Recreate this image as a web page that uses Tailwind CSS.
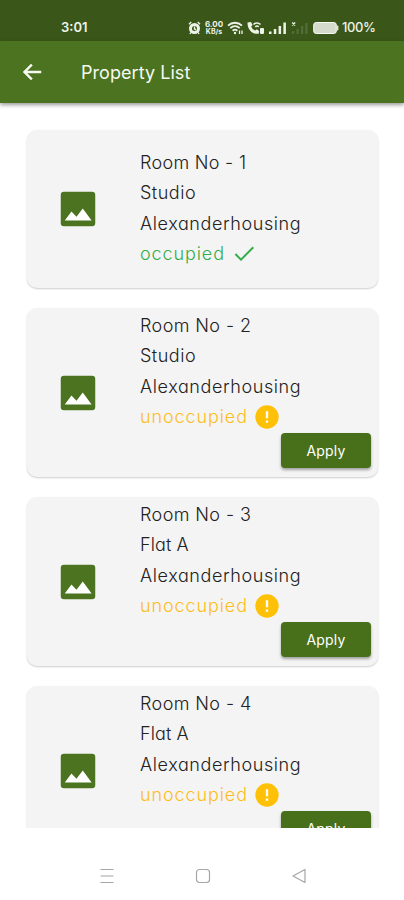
<!DOCTYPE html>
<html lang="en">
<head>
    <meta charset="UTF-8">
    <meta name="viewport" content="width=device-width, initial-scale=1.0">
    <title>Property List</title>
    <script src="https://cdn.jsdelivr.net/npm/@tailwindcss/browser@4"></script>
    <style>
        /* Single-storey a */
        body {
            font-feature-settings: "cv11";
        }
    </style>
</head>
<body class="h-screen w-screen overflow-hidden bg-white font-['Inter','Noto_Sans',sans-serif] text-[#222] flex flex-col">
    <!-- Status bar -->
    <div class="h-[41px] shrink-0 bg-[#3a5619] text-[#eef3e8] flex items-center pt-[15px] pl-[61px]">
        <span id="clock" class="w-[127px] text-[13px] font-semibold">3:01</span>
        <svg class="w-[13px] h-[14px]" viewBox="0 0 13 14">
            <circle cx="6.5" cy="7.5" r="4" fill="none" stroke="currentColor" stroke-width="3" />
            <path d="M1 3.2L3.3 1M12 3.2L9.7 1M6.5 5.5v2.3l1.5 1M2.8 11.5L2 13M10.2 11.5L11 13" fill="none" stroke="currentColor" stroke-width="1.4" />
        </svg>
        <div class="w-[20px] ml-[3px] flex flex-col items-center text-[8px] font-bold">
            <div class="h-[7px] leading-[7px]">6.00</div>
            <div class="h-[7px] leading-[7px] text-[7px]">KB/s</div>
        </div>
        <svg class="ml-[3px] w-[17px] h-[14px]" viewBox="0 0 17 14" fill="none" stroke="currentColor" stroke-width="1.8">
            <path d="M1 4.6C5 .8 11 .8 15 4.6M3.3 7.2c2.800-2.600 6.600-2.600 9.400 0M5.600 9.700c1.500-1.300 3.300-1.300 4.800 0" />
            <circle cx="8" cy="12" r="1.200" fill="currentColor" stroke="none" />
            <path d="M12.500 9.500v3.500M15 9.500v3.500" stroke-width="1.300" />
        </svg>
        <svg class="ml-[3px] w-[18px] h-[14px]" viewBox="0 0 18 14">
            <path d="M.5 1.500L4 1l1.600 3-1.400 1.500c.7 1.900 2 3.200 3.900 4l1.700-1.200 2.300 1.600-.4 2.800C5.500 13.600.3 8.500.5 1.500z" fill="currentColor" />
            <path d="M6.500 3.500C8.500 1.500 11.500 1.500 13.500 3.500M8.300 5.800c1-1 2.400-1 3.400 0" fill="none" stroke="currentColor" stroke-width="1.700" />
            <rect x="13" y="7" width="4" height="6" rx="1" fill="currentColor" />
        </svg>
        <svg class="ml-[4px] w-[18px] h-[14px]" viewBox="0 0 18 14" fill="currentColor">
            <path d="M0 10.500h2.500v2.500H0zM4.800 8h2.500v5H4.800zM9.600 5h2.500v8H9.600zM14.400 1.500h2.500v11.500h-2.500z" />
        </svg>
        <svg class="ml-[4px] w-[17px] h-[14px]" viewBox="0 0 17 14" fill="currentColor">
            <path d="M1.200 1.500l3 3M4.200 1.500l-3 3" stroke="currentColor" stroke-width="1.300" />
            <path d="M1 10h2.200v3H1zM5.500 8h2.200v5H5.500zM10 5h2.200v8H10zM14.300 2h2.200v11h-2.200z" opacity=".15" />
        </svg>
        <svg class="ml-[5px] w-[26px] h-[14px]" viewBox="0 0 26 14">
            <rect x=".7" y="1.500" width="22.600" height="11" rx="2.500" fill="#d6dccd" stroke="#f7faf3" stroke-width="1" />
            <rect x="23.800" y="4.500" width="1.600" height="5" rx=".7" fill="#dfe5d8" />
        </svg>
        <span class="ml-[3px] text-[13px] font-medium tracking-[-0.4px]">100%</span>
    </div>

    <!-- Top bar -->
    <header class="relative z-10 h-[62px] shrink-0 bg-[#4b7320] text-[#f6f9f1] flex items-center pl-[20px] shadow-[0_2px_4px_rgba(0,0,0,0.4)]">
        <svg class="w-[24px] h-[24px]" viewBox="0 0 24 24" fill="currentColor" stroke="currentColor" stroke-width=".5">
            <path d="M21 11H6.830l5.590-5.590L11 4l-8 8 8 8 1.410-1.410L6.830 13H21v-2z" />
        </svg>
        <h1 id="title" class="ml-[37px] text-[18px] font-normal tracking-[0.05px] whitespace-nowrap">Property List</h1>
    </header>

    <!-- Property list -->
    <main id="property-list" class="h-[725px] shrink-0 overflow-hidden pl-[27px] pr-[26px] pt-[27px] flex flex-col gap-[20px]">
        <div class="h-[158px] shrink-0 rounded-[10px] bg-[#f4f4f4] shadow-[0_1px_2px_rgba(0,0,0,0.2)] flex">
            <div class="w-[113px] flex items-center pl-[28px]">
                <svg class="w-[46px] h-[46px]" viewBox="0 0 24 24">
                    <rect x="3" y="3" width="18" height="18" rx="1.700" fill="#4b7320" />
                    <path d="M5.100 18l3.500-4.700 2.600 2.700 3.300-4.200L19.100 18z" fill="#fff" />
                </svg>
            </div>
            <div class="pt-[18px] text-[18px] leading-[30.4px] font-light whitespace-nowrap">
                <p class="tracking-[0.3px]">Room No - 1</p>
                <p class="tracking-[0.5px]">Studio</p>
                <p class="tracking-[0.6px]">Alexanderhousing</p>
                <p class="flex items-center tracking-[0.9px] text-[#35ad4b]"><span>occupied</span>
                    <svg class="ml-[7px] w-[24px] h-[24px]" viewBox="0 0 24 24" fill="currentColor"><path d="M9 16.170L4.100 11.300l-1.420 1.410L9 19 22 6l-1.410-1.410z" /></svg>
                </p>
            </div>
        </div>

        <div class="h-[169px] shrink-0 rounded-[10px] bg-[#f4f4f4] shadow-[0_1px_2px_rgba(0,0,0,0.2)] flex">
            <div class="w-[113px] flex items-center pl-[28px]">
                <svg class="w-[46px] h-[46px]" viewBox="0 0 24 24">
                    <rect x="3" y="3" width="18" height="18" rx="1.700" fill="#4b7320" />
                    <path d="M5.100 18l3.500-4.700 2.600 2.700 3.300-4.200L19.100 18z" fill="#fff" />
                </svg>
            </div>
            <div class="flex-1 pt-[3px] pr-[7px] text-[18px] leading-[30.4px] font-light whitespace-nowrap">
                <p class="tracking-[0.4px]">Room No - 2</p>
                <p class="tracking-[0.5px]">Studio</p>
                <p class="tracking-[0.6px]">Alexanderhousing</p>
                <p class="flex items-center tracking-[0.9px] text-[#fdbd1b]"><span>unoccupied</span>
                    <svg class="ml-[5px] w-[28px] h-[28px]" viewBox="0 0 24 24" fill="#ffc107"><circle cx="12" cy="12" r="10" /><path d="M11 7h2v6h-2zM11 15h2v2h-2z" fill="#fff" /></svg>
                </p>
                <button class="ml-auto block h-[35px] w-[90px] rounded-[4px] bg-[#48701b] text-[14px] leading-[35px] font-normal tracking-[0.2px] text-white shadow-[0_2px_3px_rgba(0,0,0,0.35)]">Apply</button>
            </div>
        </div>

        <div class="h-[169px] shrink-0 rounded-[10px] bg-[#f4f4f4] shadow-[0_1px_2px_rgba(0,0,0,0.2)] flex">
            <div class="w-[113px] flex items-center pl-[28px]">
                <svg class="w-[46px] h-[46px]" viewBox="0 0 24 24">
                    <rect x="3" y="3" width="18" height="18" rx="1.700" fill="#4b7320" />
                    <path d="M5.100 18l3.500-4.700 2.600 2.700 3.300-4.200L19.100 18z" fill="#fff" />
                </svg>
            </div>
            <div class="flex-1 pt-[3px] pr-[7px] text-[18px] leading-[30.4px] font-light whitespace-nowrap">
                <p class="tracking-[0.4px]">Room No - 3</p>
                <p class="tracking-[0.1px]">Flat A</p>
                <p class="tracking-[0.6px]">Alexanderhousing</p>
                <p class="flex items-center tracking-[0.9px] text-[#fdbd1b]"><span>unoccupied</span>
                    <svg class="ml-[5px] w-[28px] h-[28px]" viewBox="0 0 24 24" fill="#ffc107"><circle cx="12" cy="12" r="10" /><path d="M11 7h2v6h-2zM11 15h2v2h-2z" fill="#fff" /></svg>
                </p>
                <button class="ml-auto block h-[35px] w-[90px] rounded-[4px] bg-[#48701b] text-[14px] leading-[35px] font-normal tracking-[0.2px] text-white shadow-[0_2px_3px_rgba(0,0,0,0.35)]">Apply</button>
            </div>
        </div>

        <div class="h-[169px] shrink-0 rounded-[10px] bg-[#f4f4f4] shadow-[0_1px_2px_rgba(0,0,0,0.2)] flex">
            <div class="w-[113px] flex items-center pl-[28px]">
                <svg class="w-[46px] h-[46px]" viewBox="0 0 24 24">
                    <rect x="3" y="3" width="18" height="18" rx="1.700" fill="#4b7320" />
                    <path d="M5.100 18l3.500-4.700 2.600 2.700 3.300-4.200L19.100 18z" fill="#fff" />
                </svg>
            </div>
            <div class="flex-1 pt-[3px] pr-[7px] text-[18px] leading-[30.4px] font-light whitespace-nowrap">
                <p class="tracking-[0.4px]">Room No - 4</p>
                <p class="tracking-[0.1px]">Flat A</p>
                <p class="tracking-[0.6px]">Alexanderhousing</p>
                <p class="flex items-center tracking-[0.9px] text-[#fdbd1b]"><span>unoccupied</span>
                    <svg class="ml-[5px] w-[28px] h-[28px]" viewBox="0 0 24 24" fill="#ffc107"><circle cx="12" cy="12" r="10" /><path d="M11 7h2v6h-2zM11 15h2v2h-2z" fill="#fff" /></svg>
                </p>
                <button class="ml-auto block h-[35px] w-[90px] rounded-[4px] bg-[#48701b] text-[14px] leading-[35px] font-normal tracking-[0.2px] text-white shadow-[0_2px_3px_rgba(0,0,0,0.35)]">Apply</button>
            </div>
        </div>
    </main>

    <!-- System navigation -->
    <nav class="flex-1 flex items-center justify-between pl-[99px] pr-[97px] pt-[23px] text-[#a6a6a6]">
        <svg class="w-[16px] h-[16px]" viewBox="0 0 16 16" fill="none" stroke="currentColor" stroke-width="1.200"><path d="M1.500 1.500h13M1.500 8h13M1.500 14.500h13" /></svg>
        <svg class="w-[16px] h-[16px]" viewBox="0 0 16 16" fill="none" stroke="currentColor" stroke-width="1.200"><rect x="1.500" y="1.500" width="13" height="13" rx="3" /></svg>
        <svg class="w-[16px] h-[16px]" viewBox="0 0 16 16" fill="none" stroke="currentColor" stroke-width="1.200" stroke-linejoin="round"><path d="M14 1.500v13L2 8z" /></svg>
    </nav>
</body>
</html>
